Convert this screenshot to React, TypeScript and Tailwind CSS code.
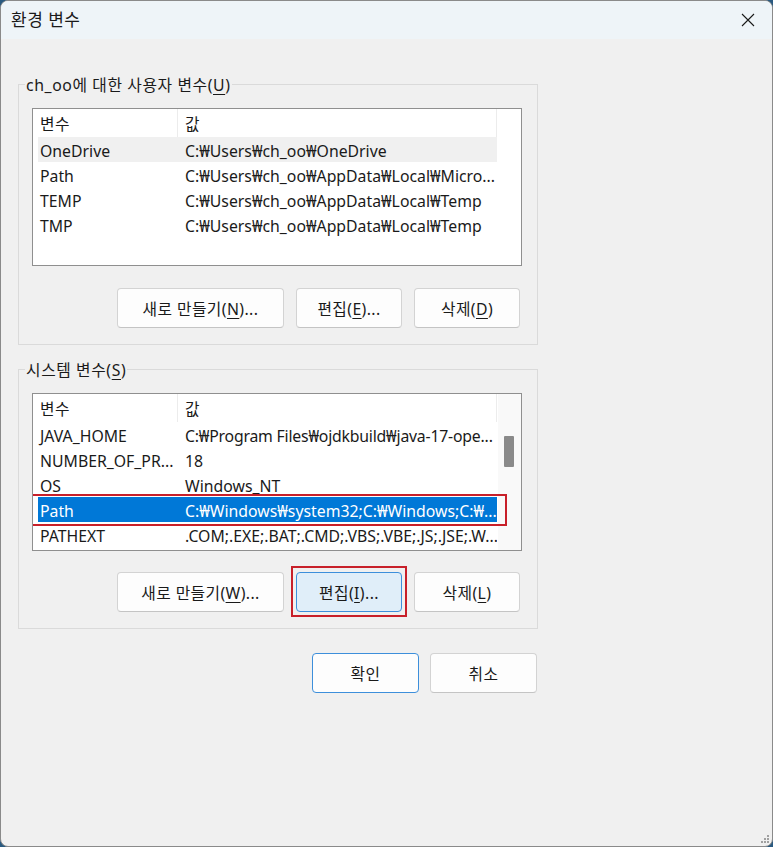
import React from "react";

const F = "font-['Noto_Sans','Noto_Sans_CJK_KR',sans-serif]";

function U({ c }: { c: string }) {
  return <span className="underline underline-offset-[3px] decoration-[1px]">{c}</span>;
}

type Row = { name: string; value: string; hot?: boolean; sel?: boolean; tight?: boolean };

const userRows: Row[] = [
  { name: "OneDrive", value: "C:₩Users₩ch_oo₩OneDrive", hot: true },
  { name: "Path", value: "C:₩Users₩ch_oo₩AppData₩Local₩Micro..." },
  { name: "TEMP", value: "C:₩Users₩ch_oo₩AppData₩Local₩Temp" },
  { name: "TMP", value: "C:₩Users₩ch_oo₩AppData₩Local₩Temp" },
];

const sysRows: Row[] = [
  { name: "JAVA_HOME", value: "C:₩Program Files₩ojdkbuild₩java-17-ope...", tight: true },
  { name: "NUMBER_OF_PR...", value: "18" },
  { name: "OS", value: "Windows_NT" },
  { name: "Path", value: "C:₩Windows₩system32;C:₩Windows;C:₩...", sel: true },
  { name: "PATHEXT", value: ".COM;.EXE;.BAT;.CMD;.VBS;.VBE;.JS;.JSE;.W..." },
];

function List({ rows, scroll }: { rows: Row[]; scroll?: boolean }) {
  return (
    <div className="w-[490px] h-[158px] border border-[#8f8f8f] bg-white flex overflow-hidden">
      <div className="w-[464px] pl-[5px] flex flex-col">
        <div className="h-[28px] flex text-[#1a1a1a] shrink-0">
          <div className="w-[140px] pl-[2px] pt-[1px] h-full flex items-center border-r border-[#ececec] tracking-[0.5px]">변수</div>
          <div className="w-[319px] pl-[7px] pt-[1px] h-full flex items-center border-r border-[#ececec]">값</div>
        </div>
        {rows.map((r, i) => (
          <div
            key={i}
            className={
              "relative h-[25px] flex shrink-0 w-[459px] " +
              (r.sel ? "bg-[#0078d7] text-white" : r.hot ? "bg-[#f0f0f0] text-[#1a1a1a]" : "text-[#1a1a1a]")
            }
          >
            <div className="w-[140px] pl-[2px] pt-[2px] flex items-center whitespace-nowrap overflow-hidden">{r.name}</div>
            <div
              className={
                "w-[319px] pl-[7px] pt-[2px] flex items-center whitespace-nowrap overflow-hidden " +
                (r.tight ? "tracking-[-0.2px]" : "")
              }
            >
              {r.value}
            </div>
            {r.sel && (
              <div className="absolute left-[-11px] right-[-10px] top-[-3px] bottom-[-4px] border-2 border-[#c8202a]" />
            )}
          </div>
        ))}
      </div>
      {scroll && (
        <div className="w-[23px] ml-[1px] bg-[#f9f9f9] pt-[42px] pl-[6px]">
          <div className="w-[10px] h-[31px] bg-[#8a8a8a] rounded-[1px]" />
        </div>
      )}
    </div>
  );
}

function Btn({
  children,
  w,
  hl,
  def,
  red,
}: {
  children: React.ReactNode;
  w: string;
  hl?: boolean;
  def?: boolean;
  red?: boolean;
}) {
  const cls =
    w +
    " h-[40px] rounded-[4px] border flex items-center justify-center pt-[1px] text-[#1a1a1a] tracking-[0.4px] " +
    (hl
      ? "bg-[#e0eef9] border-[#3d8fdb]"
      : def
      ? "bg-[#fdfdfd] border-[#3d8fdb]"
      : "bg-[#fdfdfd] border-[#d3d3d3] border-b-[#c4c4c4]");
  const b = <div className={cls}>{children}</div>;
  if (red) {
    return (
      <div className="relative">
        {b}
        <div className="absolute left-[-5px] right-[-5px] top-[-6px] bottom-[-5px] border-2 border-[#c8202a]" />
      </div>
    );
  }
  return b;
}

export default function App() {
  return (
    <div className={"w-[773px] h-[847px] bg-[#2a5a80] " + F}>
      <div className="relative w-full h-full rounded-[8px] border border-[#8a8a8a] bg-[#f0f0f0] overflow-hidden flex flex-col text-[15.8px] leading-[20px]">
        <div className="h-[38px] bg-[#eef4f8] flex items-center justify-between pl-[10px] pr-[17px] shrink-0">
          <span className="text-[#1a1a1a] text-[17px] tracking-[0.5px]">환경 변수</span>
          <svg width="14" height="14" viewBox="0 0 14 14">
            <path d="M1 1 L13 13 M13 1 L1 13" stroke="#1a1a1a" strokeWidth="1.1" fill="none" />
          </svg>
        </div>
        <div className="pl-[17px] pt-[34px] w-[537px] flex flex-col">
          <fieldset className="border border-[#dadada] px-0 pb-[16px] m-0">
            <legend className="ml-[6px] px-[1px] pt-[2px] leading-[20px] text-[#1a1a1a] tracking-[0.6px]">
              ch_oo에 대한 사용자 변수(<U c="U" />)
            </legend>
            <div className="mt-[13px] ml-[13px]">
              <List rows={userRows} />
            </div>
            <div className="mt-[22px] ml-[98px] flex gap-[12px]">
              <Btn w="w-[167px]">
                새로 만들기(<U c="N" />)...
              </Btn>
              <Btn w="w-[106px]">
                편집(<U c="E" />)...
              </Btn>
              <Btn w="w-[106px]">
                삭제(<U c="D" />)
              </Btn>
            </div>
          </fieldset>
          <fieldset className="mt-[13px] border border-[#dadada] px-0 pb-[16px] m-0">
            <legend className="ml-[6px] px-[1px] pt-[2px] leading-[20px] text-[#1a1a1a] tracking-[0.6px]">
              시스템 변수(<U c="S" />)
            </legend>
            <div className="mt-[13px] ml-[13px]">
              <List rows={sysRows} scroll />
            </div>
            <div className="mt-[21px] ml-[98px] flex gap-[12px]">
              <Btn w="w-[167px]">
                새로 만들기(<U c="W" />)...
              </Btn>
              <Btn w="w-[106px]" hl red>
                편집(<U c="I" />)...
              </Btn>
              <Btn w="w-[106px]">
                삭제(<U c="L" />)
              </Btn>
            </div>
          </fieldset>
          <div className="mt-[24px] flex justify-end gap-[11px] pr-[1px]">
            <Btn w="w-[107px]" def>
              확인
            </Btn>
            <Btn w="w-[107px]">취소</Btn>
          </div>
        </div>
        <svg className="absolute right-[2px] bottom-[2px]" width="10" height="10" viewBox="0 0 10 10">
          <rect x="7" y="1" width="2" height="2" fill="#a0a0a0" />
          <rect x="4" y="4" width="2" height="2" fill="#a0a0a0" />
          <rect x="7" y="4" width="2" height="2" fill="#a0a0a0" />
          <rect x="1" y="7" width="2" height="2" fill="#a0a0a0" />
          <rect x="4" y="7" width="2" height="2" fill="#a0a0a0" />
          <rect x="7" y="7" width="2" height="2" fill="#a0a0a0" />
        </svg>
      </div>
    </div>
  );
}
